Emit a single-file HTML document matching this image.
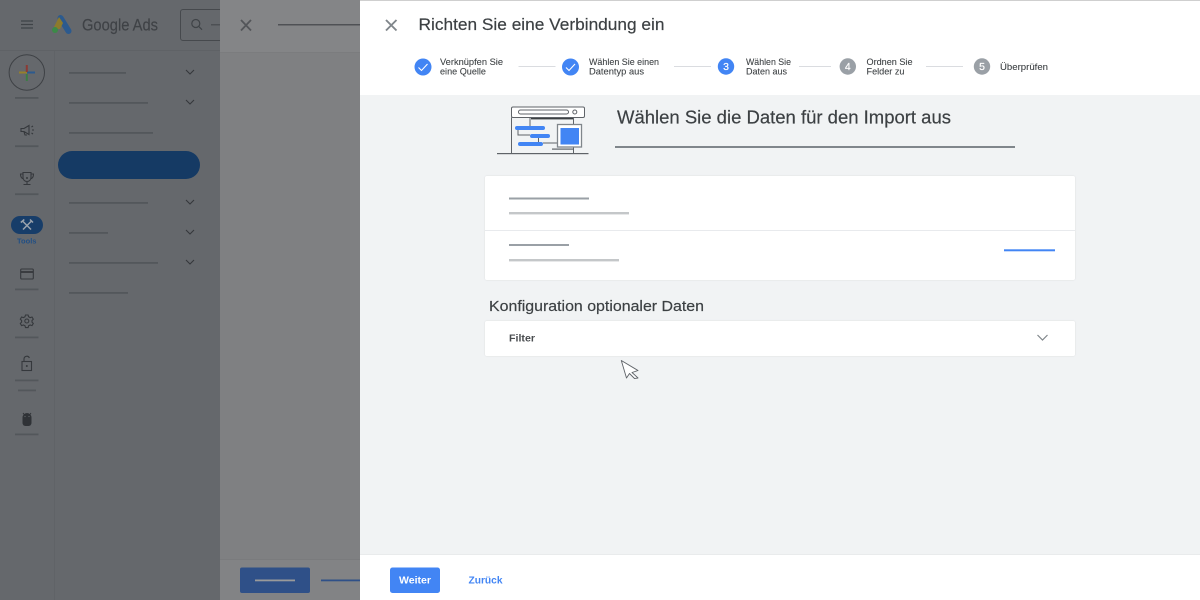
<!DOCTYPE html>
<html lang="de"><head><meta charset="utf-8"><title>Google Ads</title>
<style>html,body{margin:0;padding:0;width:1200px;height:600px;overflow:hidden;background:#fff}svg{display:block}text{font-family:"Liberation Sans",sans-serif}.b{stroke:#3c4043;stroke-width:.18}</style></head>
<body>
<svg width="1200" height="600" viewBox="0 0 1200 600" xmlns="http://www.w3.org/2000/svg">
<defs><filter id="s" x="-5%" y="-20%" width="110%" height="140%"><feDropShadow dx="0" dy="0" stdDeviation="0.7" flood-color="#000" flood-opacity=".12"/></filter></defs>
<!-- left app -->
<rect width="220" height="600" fill="#65686c"/>
<rect x="0" y="50" width="220" height="1" fill="#5f6266"/>
<rect x="54" y="51" width="1" height="549" fill="#606367"/>
<g fill="none" stroke="#3f4347" stroke-width="1.2"><path d="M21 21h12M21 24.500h12M21 28h12"/></g>
<path d="M60.500 18L68.500 31" stroke="#2c5a8e" stroke-width="6" stroke-linecap="round"/>
<path d="M59 17L53 29L60 29L63 23Z" fill="#8d7a2c"/>
<circle cx="55" cy="30" r="3" fill="#3c8a48"/>
<text x="82" y="30.500" font-size="17" fill="#3f4246" stroke="#3f4246" stroke-width=".15" textLength="76" lengthAdjust="spacingAndGlyphs">Google Ads</text>
<rect x="180.500" y="9.500" width="50" height="31" rx="2.500" fill="none" stroke="#46494d"/>
<g fill="none" stroke="#3f4347" stroke-width="1.200"><circle cx="195.800" cy="23.500" r="4"/><path d="M198.800 26.500L202 29.700"/></g>
<rect x="211" y="24" width="9" height="1.500" fill="#4d5054"/>
<circle cx="26.800" cy="72.500" r="17.700" fill="none" stroke="#3e4145"/>
<rect x="19" y="71.500" width="8" height="2" fill="#95802c"/><rect x="27" y="71.500" width="8" height="2" fill="#2c5a8e"/>
<rect x="25.800" y="65" width="2" height="7" fill="#8c3a34"/><rect x="25.800" y="74" width="2" height="7" fill="#3c7d45"/>
<g fill="#53575b">
<rect x="15" y="97" width="23.500" height="1.800"/><rect x="15" y="145.300" width="23.500" height="1.800"/><rect x="15" y="193.300" width="23.500" height="1.800"/>
<rect x="15" y="288.500" width="23.500" height="1.800"/><rect x="15" y="336.500" width="23.500" height="1.800"/><rect x="15" y="379.500" width="23.500" height="1.800"/>
<rect x="18" y="389.500" width="18" height="1.800"/><rect x="15" y="433.500" width="23.500" height="1.800"/>
<rect x="69" y="72" width="57" height="1.800"/><rect x="69" y="102" width="79" height="1.800"/><rect x="69" y="132" width="84" height="1.800"/>
<rect x="69" y="202" width="79" height="1.800"/><rect x="69" y="232" width="39" height="1.800"/><rect x="69" y="262" width="89" height="1.800"/><rect x="69" y="292" width="59" height="1.800"/>
</g>
<g fill="none" stroke="#35383c" stroke-width="1.100">
<path d="M186 70l4 4 4-4M186 100l4 4 4-4M186 200l4 4 4-4M186 230l4 4 4-4M186 260l4 4 4-4"/>
<path d="M21 128.500h3l5-3v9l-5-3h-3zM24 132l1 3h2M31.500 127l1.500-1M32 130h2M31.500 133l1.500 1"/>
<path d="M23 172.500h8v5a4 4 0 0 1-8 0zM23 174h-2.500c0 3 1 4.500 3 4.800M31 174h2.500c0 3-1 4.500-3 4.800M27 182v2.500M23.500 184.500h7"/>
<rect x="20.700" y="269" width="12.600" height="10" rx="1"/><path d="M20.700 272h12.600" stroke-width="1.800"/>
<circle cx="26.800" cy="321" r="2"/><path d="M25.500 315h2.600l.5 1.800 1.600.8 1.800-.6 1.300 2.200-1.300 1.300v1.600l1.300 1.300-1.300 2.200-1.800-.6-1.600.8-.5 1.800h-2.600l-.5-1.800-1.600-.8-1.800.6-1.300-2.200 1.300-1.300v-1.600l-1.300-1.300 1.300-2.200 1.800.6 1.600-.8z"/>
<rect x="22" y="361.500" width="9.500" height="9"/><path d="M24 361.500v-2.500a2.800 2.800 0 0 1 5.400-1"/>
</g>
<circle cx="26.800" cy="366" r="1" fill="#35383c"/><circle cx="27" cy="178" r="1" fill="#35383c"/>
<path d="M22.500 417.500a4.500 4.500 0 0 1 9 0v5.500a3 3 0 0 1-3 3h-3a3 3 0 0 1-3-3z" fill="#2f3236"/>
<path d="M23 413l1.500 2M31 413l-1.500 2" stroke="#2f3236"/>
<circle cx="25" cy="416.500" r=".6" fill="#65686c"/><circle cx="29" cy="416.500" r=".6" fill="#65686c"/>
<rect x="11" y="216" width="32" height="18" rx="9" fill="#173d69"/>
<path d="M22.500 221l8.500 8.500M31.500 221l-8.500 8.500M20.800 222.500l3.500-3M33 222.500l-3-3" stroke="#9ba3ad" stroke-width="1.500" fill="none"/>
<text x="17" y="243.500" font-size="7.500" font-weight="bold" fill="#214f85" textLength="19.500" lengthAdjust="spacingAndGlyphs">Tools</text>
<rect x="58" y="151" width="142" height="28" rx="14" fill="#153a64"/>
<!-- middle layer -->
<rect x="220" width="140" height="600" fill="#7f8082"/>
<rect x="220" width="140" height="52" fill="#848587"/>
<rect x="220" y="52" width="140" height="1" fill="#7b7c7e"/>
<rect x="220" y="560" width="140" height="40" fill="#828385"/>
<rect x="220" y="559" width="140" height="1" fill="#7a7b7d"/>
<path d="M241 20l10 10.500M251 20l-10 10.500" stroke="#535559" stroke-width="1.800" fill="none"/>
<rect x="278" y="24" width="82" height="1.500" fill="#4f5155"/>
<rect x="240" y="567.500" width="70" height="25.500" rx="2" fill="#2f5088"/>
<rect x="255" y="579.500" width="40" height="1.800" fill="#9a9a9a"/>
<rect x="321" y="579.500" width="39" height="1.800" fill="#2f5088"/>
<!-- panel -->
<rect x="360" width="840" height="600" fill="#fff"/>
<rect x="360" width="840" height="1" fill="#cfcfcf"/>
<rect x="360" y="95" width="840" height="460" fill="#f1f3f4"/>
<path d="M386 20l10.500 10.500M396.500 20L386 30.500" stroke="#80868b" stroke-width="1.900" fill="none"/>
<text class="b" x="418.500" y="30" font-size="17" fill="#3c4043" textLength="246" lengthAdjust="spacingAndGlyphs">Richten Sie eine Verbindung ein</text>
<!-- steps -->
<g fill="#3c4043" font-size="9" stroke="#3c4043" stroke-width=".08">
<text x="440" y="65" textLength="63" lengthAdjust="spacingAndGlyphs">Verknüpfen Sie</text><text x="440" y="74.500" textLength="46" lengthAdjust="spacingAndGlyphs">eine Quelle</text>
<text x="589" y="65" textLength="70" lengthAdjust="spacingAndGlyphs">Wählen Sie einen</text><text x="589" y="74.500" textLength="55" lengthAdjust="spacingAndGlyphs">Datentyp aus</text>
<text x="746" y="65" textLength="45" lengthAdjust="spacingAndGlyphs">Wählen Sie</text><text x="746" y="74.500" textLength="41" lengthAdjust="spacingAndGlyphs">Daten aus</text>
<text x="866.500" y="65" textLength="46" lengthAdjust="spacingAndGlyphs">Ordnen Sie</text><text x="866.500" y="74.500" textLength="38" lengthAdjust="spacingAndGlyphs">Felder zu</text>
<text x="1000" y="70" textLength="48" lengthAdjust="spacingAndGlyphs">Überprüfen</text>
</g>
<g fill="#dadce0"><rect x="518.500" y="66" width="37" height="1"/><rect x="674" y="66" width="37" height="1"/><rect x="799" y="66" width="32" height="1"/><rect x="926" y="66" width="37" height="1"/></g>
<circle cx="423" cy="67" r="8.500" fill="#4285f4"/><circle cx="570.500" cy="67" r="8.500" fill="#4285f4"/><circle cx="726" cy="66.500" r="8.200" fill="#4285f4"/>
<circle cx="847.800" cy="66.500" r="8.200" fill="#9aa0a6"/><circle cx="982" cy="66.500" r="8.200" fill="#9aa0a6"/>
<path d="M418.500 67.500l3 3 6-6.500M566 67.500l3 3 6-6.500" stroke="#fff" stroke-width="1.100" fill="none"/>
<g fill="#fff" font-size="10.500" text-anchor="middle" stroke="#fff" stroke-width=".2"><text x="726" y="70.200">3</text><text x="847.800" y="70.200">4</text><text x="982" y="70.200">5</text></g>
<!-- illustration -->
<g fill="none" stroke="#5f6368" stroke-width="1">
<rect x="511.500" y="107" width="73" height="10.500" rx="1.500" fill="#fff"/>
<rect x="518.500" y="110" width="50" height="4" rx="2"/><circle cx="574.800" cy="112" r="2"/>
<path d="M511.500 117.500V153.500M573.500 117.500v7M573.500 147v6.500M530 117.500v9M518 130v5h12M538.500 138v5M543 143h14"/>
</g>
<rect x="531" y="118" width="42" height="1.400" fill="#3c4043"/>
<rect x="552" y="148.500" width="22" height="1.200" fill="#5f6368"/>
<rect x="497" y="153" width="91.500" height="1.200" fill="#5f6368"/>
<rect x="515" y="126" width="30" height="4" rx="2" fill="#4285f4"/>
<rect x="530" y="134" width="20" height="4" rx="2" fill="#4285f4"/>
<rect x="518" y="142" width="25" height="4" rx="2" fill="#4285f4"/>
<rect x="557.500" y="124.500" width="24" height="22.500" fill="#fff" stroke="#80868b" stroke-width="1.300"/>
<rect x="560.500" y="128" width="18.500" height="16.500" fill="#4285f4"/>
<!-- heading -->
<text class="b" x="617" y="123.500" font-size="18" fill="#3c4043" textLength="334" lengthAdjust="spacingAndGlyphs">Wählen Sie die Daten für den Import aus</text>
<rect x="615" y="146" width="400" height="2" fill="#80868b"/>
<!-- card 1 -->
<rect x="485" y="176" width="590" height="104" rx="2" fill="#fff" filter="url(#s)"/>
<rect x="485" y="230" width="590" height="1" fill="#e8eaed"/>
<rect x="509" y="197.500" width="80" height="2" fill="#9aa0a6"/>
<rect x="509" y="212" width="120" height="2.400" fill="#c4c7c9"/>
<rect x="509" y="244" width="60" height="2" fill="#9aa0a6"/>
<rect x="509" y="259" width="110" height="2.400" fill="#c4c7c9"/>
<rect x="1004" y="249.300" width="51" height="2" fill="#4285f4"/>
<text class="b" x="489" y="311" font-size="15" fill="#3c4043" textLength="215" lengthAdjust="spacingAndGlyphs">Konfiguration optionaler Daten</text>
<!-- card 2 -->
<rect x="485" y="321" width="590" height="35" rx="2" fill="#fff" filter="url(#s)"/>
<text x="509" y="341.500" font-size="10.500" font-weight="bold" fill="#4a4d50" textLength="26" lengthAdjust="spacingAndGlyphs">Filter</text>
<path d="M1037.500 335l5 5 5-5" stroke="#80868b" stroke-width="1.200" fill="none"/>
<path d="M621.300 360.500L638 370.500L632 372.500L638 378L634.500 378.500L629.500 373.500L626.500 378Z" fill="#fff" stroke="#5f6368" stroke-width=".9" stroke-linejoin="round"/>
<!-- footer -->
<rect x="360" y="555" width="840" height="45" fill="#fff"/>
<rect x="360" y="554" width="840" height="1" fill="#e9ebec"/>
<rect x="390" y="567.500" width="50" height="25.500" rx="2.500" fill="#4285f4"/>
<text x="399" y="583.500" font-size="10.500" font-weight="bold" fill="#fff" textLength="32" lengthAdjust="spacingAndGlyphs">Weiter</text>
<text x="468.500" y="583.500" font-size="10.500" font-weight="bold" fill="#4285f4" textLength="34" lengthAdjust="spacingAndGlyphs">Zurück</text>
</svg>
</body></html>
